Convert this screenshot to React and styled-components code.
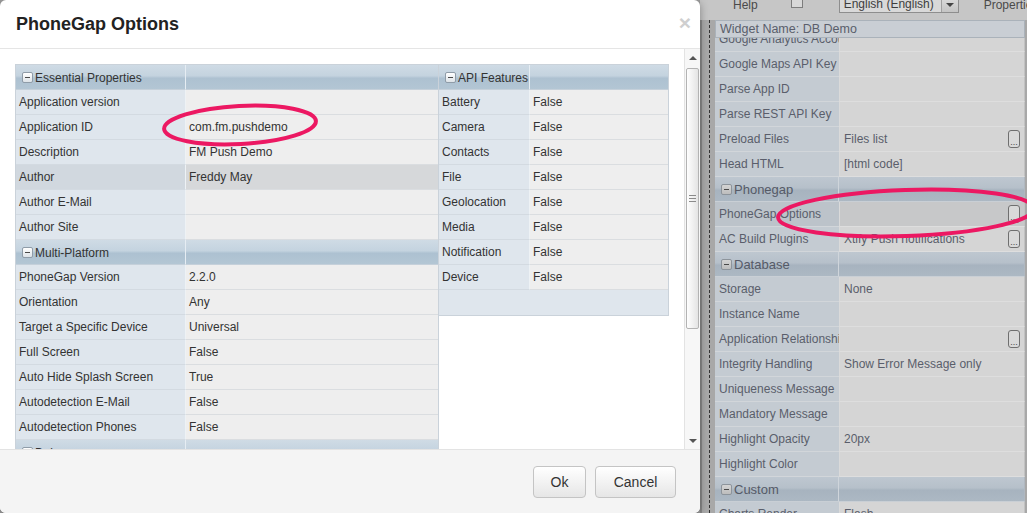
import styled, { createGlobalStyle } from 'styled-components'

const GlobalStyle = createGlobalStyle`
  html, body {
    margin: 0;
    padding: 0;
    overflow: hidden;
  }
  body {
    font-family: "Liberation Sans", Arial, sans-serif;
    font-size: 12px;
  }
  * { box-sizing: border-box; }
`

const Page = styled.div`
  position: relative;
  width: 1027px;
  height: 513px;
  overflow: hidden;
  display: flex;
  background: #a5a5a5;
`

const Workspace = styled.div`
  width: 700px;
  flex: none;
  background: #9e9e9e;
`

const SideColumn = styled.div`
  flex: 1;
  display: flex;
  flex-direction: column;
  min-width: 0;
`

const Toolbar = styled.div`
  height: 20px;
  flex: none;
  background: #c6c6c6;
  display: flex;
  align-items: flex-start;
  overflow: hidden;
  color: #4a4a4a;
  font-size: 12px;
`

const ToolItem = styled.div`
  margin-left: ${(p) => p.$ml}px;
  margin-top: -2px;
  flex: none;
  line-height: 14px;
`

const CheckBox = styled.div`
  margin-left: ${(p) => p.$ml}px;
  margin-top: -4px;
  width: 12px;
  height: 12px;
  border: 1px solid #7d7d7d;
  background: #d8d8d8;
  flex: none;
`

const Select = styled.div`
  margin-left: ${(p) => p.$ml}px;
  margin-top: -5px;
  width: 120px;
  height: 18px;
  border: 1px solid #8e8e8e;
  background: #d9d9d9;
  display: flex;
  align-items: flex-end;
  flex: none;
  color: #3e3e3e;
`

const SelectText = styled.span`
  flex: 1;
  padding: 0 0 2px 4px;
  line-height: 12px;
`

const SelectArrow = styled.span`
  width: 17px;
  height: 15px;
  border-left: 1px solid #a0a0a0;
  background: linear-gradient(#dcdcdc, #c4c4c4);
  display: flex;
  align-items: center;
  justify-content: center;
  &::after {
    content: '';
    border-left: 4px solid transparent;
    border-right: 4px solid transparent;
    border-top: 4px solid #444;
  }
`

const Dock = styled.div`
  flex: 1;
  display: flex;
  min-height: 0;
`

const Gutter = styled.div`
  width: 9px;
  flex: none;
  background: #a9a9a9;
  border-left: 2px solid #8a8a8a;
`

const Frame = styled.div`
  flex: 1;
  min-width: 0;
  border-left: 1px dashed #333;
  padding: 0 2px 0 5px;
  background: #a8a8a8;
  display: flex;
  flex-direction: column;
`

const Inspector = styled.div`
  flex: 1;
  display: flex;
  flex-direction: column;
  overflow: hidden;
  background: #c4cbd2;
  color: #5a5e6b;
`

const InspectorTitle = styled.div`
  height: 18px;
  flex: none;
  background: #c9ced4;
  border: 1px solid #aab2ba;
  padding-left: 4px;
  line-height: 16px;
  font-size: 12.5px;
  position: relative;
  z-index: 1;
`

const InspectorScroll = styled.div`
  flex: 1;
  overflow: hidden;
`

const InspectorList = styled.div`
  margin-top: -11px;
`

const IRow = styled.div`
  display: grid;
  grid-template-columns: 124px 1fr;
  height: 25px;
`

const ILabel = styled.div`
  background: ${(p) => (p.$selected ? '#bcc3ca' : '#c4cbd2')};
  border-bottom: 1px solid #d2d6da;
  padding-left: 4px;
  line-height: 25px;
  white-space: nowrap;
  overflow: hidden;
`

const IValue = styled.div`
  background: ${(p) => (p.$selected ? '#c7c8c9' : '#d5d5d5')};
  border-left: 1px solid #dadada;
  border-bottom: 1px solid #dedede;
  border-right: 1px solid #c2c2c2;
  padding: 0 4px 0 4px;
  display: flex;
  align-items: center;
  justify-content: space-between;
  white-space: nowrap;
  overflow: hidden;
`

const IHeaderCell = styled.div`
  background: linear-gradient(#bec7d0 0%, #b6c0ca 45%, #a7b3bf 55%, #acb8c3 100%);
  border-bottom: 1px solid #c9cfd5;
  border-right: ${(p) => (p.$first ? '1px solid #cfd5db' : '1px solid #b0b8c0')};
  display: flex;
  align-items: center;
  gap: 2px;
  padding-left: 6px;
  font-size: 13px;
  color: #555a67;
`

const DotsButton = styled.span`
  width: 12px;
  height: 18px;
  flex: none;
  border: 1px solid #6f6f6f;
  border-radius: 3px;
  background: #d9d9d9;
  font-size: 9px;
  line-height: 22px;
  text-align: center;
  color: #444;
`

const Minus = styled.span`
  width: 11px;
  height: 11px;
  flex: none;
  border: 1px solid ${(p) => (p.$dim ? '#8d949b' : '#8f9ca8')};
  border-radius: 2px;
  background: ${(p) => (p.$dim ? 'linear-gradient(#d4d4d4, #bdbdbd)' : 'linear-gradient(#ffffff, #dde3e8)')};
  display: flex;
  align-items: center;
  justify-content: center;
  &::after {
    content: '';
    width: 5px;
    height: 1px;
    background: #4a4a4a;
  }
`

/* Modal */

const Modal = styled.div`
  position: absolute;
  left: 0;
  top: 0;
  width: 700px;
  height: 513px;
  background: #fff;
  border-radius: 6px;
  display: flex;
  flex-direction: column;
  overflow: hidden;
  box-shadow: 0 2px 8px rgba(0, 0, 0, 0.35);
  z-index: 2;
`

const ModalHeader = styled.div`
  height: 49px;
  flex: none;
  border-bottom: 1px solid #e5e5e5;
  display: flex;
  align-items: center;
  justify-content: space-between;
  padding: 0 9px 0 16px;
`

const Title = styled.h3`
  margin: 0;
  font-size: 18px;
  font-weight: bold;
  color: #222;
`

const Close = styled.span`
  font-size: 21px;
  font-weight: bold;
  color: #cfcfcf;
  line-height: 1;
  margin-top: -3px;
`

const ModalBody = styled.div`
  flex: 1;
  min-height: 0;
  display: flex;
`

const BodyContent = styled.div`
  flex: 1;
  overflow: hidden;
  padding: 15px 0 0 15px;
  display: flex;
  align-items: flex-start;
`

const Scrollbar = styled.div`
  width: 16px;
  flex: none;
  border-left: 1px solid #e3e3e3;
  background: #f7f7f7;
  display: flex;
  flex-direction: column;
  padding: 0 1px;
`

const ScrollArrow = styled.div`
  height: 17px;
  flex: none;
  display: flex;
  align-items: center;
  justify-content: center;
  &::after {
    content: '';
    border-left: 4px solid transparent;
    border-right: 4px solid transparent;
    ${(p) => (p.$down ? 'border-top: 4px solid #555;' : 'border-bottom: 4px solid #555;')}
  }
`

const Thumb = styled.div`
  height: 261px;
  margin-top: 2px;
  flex: none;
  border: 1px solid #b3b3b3;
  border-radius: 2px;
  background: linear-gradient(90deg, #fefefe, #e4e4e4);
  display: flex;
  flex-direction: column;
  align-items: center;
  justify-content: center;
  gap: 2px;
`

const Grip = styled.span`
  width: 7px;
  height: 1px;
  background: #8a8a8a;
`

const Track = styled.div`
  flex: 1;
`

const Grid = styled.div`
  width: ${(p) => p.$width}px;
  flex: none;
  border: 1px solid #cad2da;
  ${(p) => (p.$joined ? 'border-left: none;' : '')}
  background: #fff;
`

const Row = styled.div`
  display: grid;
  grid-template-columns: ${(p) => p.$label}px 1fr;
  height: 25px;
`

const Label = styled.div`
  background: ${(p) => (p.$selected ? '#d1d8df' : '#dfe6ed')};
  border-bottom: 1px solid #d3dae1;
  border-right: 1px solid #eef2f5;
  padding-left: 3px;
  line-height: 24px;
  color: #333;
  white-space: nowrap;
  overflow: hidden;
`

const Value = styled.div`
  background: ${(p) => (p.$selected ? '#d6d8da' : '#eeeeee')};
  border-bottom: 1px solid #dadde0;
  padding-left: 3px;
  line-height: 24px;
  color: #333;
  white-space: nowrap;
  overflow: hidden;
`

const HeaderCell = styled.div`
  background: linear-gradient(#cfdbe5 0%, #c4d3df 45%, #adc1d1 55%, #b3c6d4 100%);
  border-bottom: 1px solid #c5d0da;
  border-right: ${(p) => (p.$first ? '1px solid #e6edf3' : 'none')};
  display: flex;
  align-items: center;
  gap: 2px;
  padding: 1px 0 0 6px;
  color: #333;
  font-size: 12px;
`

const Filler = styled.div`
  height: 25px;
  background: #dfe6ed;
`

const Footer = styled.div`
  height: 64px;
  flex: none;
  border-top: 1px solid #e3e3e3;
  background: #f4f4f4;
  display: flex;
  align-items: center;
  justify-content: flex-end;
  gap: 9px;
  padding-right: 24px;
`

const Button = styled.button`
  width: ${(p) => p.$width}px;
  height: 32px;
  border: 1px solid #c4c4c4;
  border-radius: 4px;
  background: linear-gradient(#ffffff, #e6e6e6);
  font-family: "Liberation Sans", Arial, sans-serif;
  font-size: 14px;
  color: #333;
  padding: 0;
`

const Annotations = styled.svg`
  position: absolute;
  left: 0;
  top: 0;
  pointer-events: none;
  z-index: 3;
`

const essential = [
  ['Application version', ''],
  ['Application ID', 'com.fm.pushdemo'],
  ['Description', 'FM Push Demo'],
  ['Author', 'Freddy May', true],
  ['Author E-Mail', ''],
  ['Author Site', ''],
]

const multiPlatform = [
  ['PhoneGap Version', '2.2.0'],
  ['Orientation', 'Any'],
  ['Target a Specific Device', 'Universal'],
  ['Full Screen', 'False'],
  ['Auto Hide Splash Screen', 'True'],
  ['Autodetection E-Mail', 'False'],
  ['Autodetection Phones', 'False'],
]

const debug = [
  ['Debug Mode', 'False'],
  ['Log Level', 'None'],
]

const apiFeatures = ['Battery', 'Camera', 'Contacts', 'File', 'Geolocation', 'Media', 'Notification', 'Device']

const inspectorRows = [
  { label: 'Google Analytics Account' },
  { label: 'Google Maps API Key' },
  { label: 'Parse App ID' },
  { label: 'Parse REST API Key' },
  { label: 'Preload Files', value: 'Files list', dots: true },
  { label: 'Head HTML', value: '[html code]' },
  { header: 'Phonegap' },
  { label: 'PhoneGap Options', dots: true, selected: true },
  { label: 'AC Build Plugins', value: 'Xtify Push notifications', dots: true },
  { header: 'Database' },
  { label: 'Storage', value: 'None' },
  { label: 'Instance Name' },
  { label: 'Application Relationships', dots: true },
  { label: 'Integrity Handling', value: 'Show Error Message only' },
  { label: 'Uniqueness Message' },
  { label: 'Mandatory Message' },
  { label: 'Highlight Opacity', value: '20px' },
  { label: 'Highlight Color' },
  { header: 'Custom' },
  { label: 'Charts Render', value: 'Flash' },
]

function Section({ title, rows, label }) {
  return (
    <>
      <Row $label={label}>
        <HeaderCell $first>
          <Minus />
          {title}
        </HeaderCell>
        <HeaderCell />
      </Row>
      {rows.map(([name, value, selected]) => (
        <Row key={name} $label={label}>
          <Label $selected={selected}>{name}</Label>
          <Value $selected={selected}>{value}</Value>
        </Row>
      ))}
    </>
  )
}

function PhoneGapOptions() {
  return (
    <Modal>
      <ModalHeader>
        <Title>PhoneGap Options</Title>
        <Close>×</Close>
      </ModalHeader>
      <ModalBody>
        <BodyContent>
          <Grid $width={424}>
            <Section title="Essential Properties" rows={essential} label={170} />
            <Section title="Multi-Platform" rows={multiPlatform} label={170} />
            <Section title="Debug" rows={debug} label={170} />
          </Grid>
          <Grid $width={230} $joined>
            <Section title="API Features" rows={apiFeatures.map((f) => [f, 'False'])} label={91} />
            <Filler />
          </Grid>
        </BodyContent>
        <Scrollbar>
          <ScrollArrow />
          <Thumb>
            <Grip />
            <Grip />
            <Grip />
          </Thumb>
          <Track />
          <ScrollArrow $down />
        </Scrollbar>
      </ModalBody>
      <Footer>
        <Button $width={53}>Ok</Button>
        <Button $width={81}>Cancel</Button>
      </Footer>
    </Modal>
  )
}

function PropertiesPanel() {
  return (
    <SideColumn>
      <Toolbar>
        <ToolItem $ml={33}>Help</ToolItem>
        <CheckBox $ml={33} />
        <Select $ml={36}>
          <SelectText>English (English)</SelectText>
          <SelectArrow />
        </Select>
        <ToolItem $ml={25}>Properties</ToolItem>
      </Toolbar>
      <Dock>
        <Gutter />
        <Frame>
          <Inspector>
            <InspectorTitle>Widget Name: DB Demo</InspectorTitle>
            <InspectorScroll>
              <InspectorList>
                {inspectorRows.map((r, i) =>
                  r.header ? (
                    <IRow key={i}>
                      <IHeaderCell $first>
                        <Minus $dim />
                        {r.header}
                      </IHeaderCell>
                      <IHeaderCell />
                    </IRow>
                  ) : (
                    <IRow key={i}>
                      <ILabel $selected={r.selected}>{r.label}</ILabel>
                      <IValue $selected={r.selected}>
                        <span>{r.value}</span>
                        {r.dots && <DotsButton>...</DotsButton>}
                      </IValue>
                    </IRow>
                  )
                )}
              </InspectorList>
            </InspectorScroll>
          </Inspector>
        </Frame>
      </Dock>
    </SideColumn>
  )
}

export default function App() {
  return (
    <Page>
      <GlobalStyle />
      <Workspace />
      <PropertiesPanel />
      <PhoneGapOptions />
      <Annotations width="1027" height="513" viewBox="0 0 1027 513">
        <ellipse cx="240" cy="125" rx="76" ry="19" transform="rotate(-3 240 125)" fill="none" stroke="#ec1862" strokeWidth="4" />
        <ellipse cx="906" cy="213" rx="128" ry="23" transform="rotate(-2 906 213)" fill="none" stroke="#ec1862" strokeWidth="4" />
      </Annotations>
    </Page>
  )
}
